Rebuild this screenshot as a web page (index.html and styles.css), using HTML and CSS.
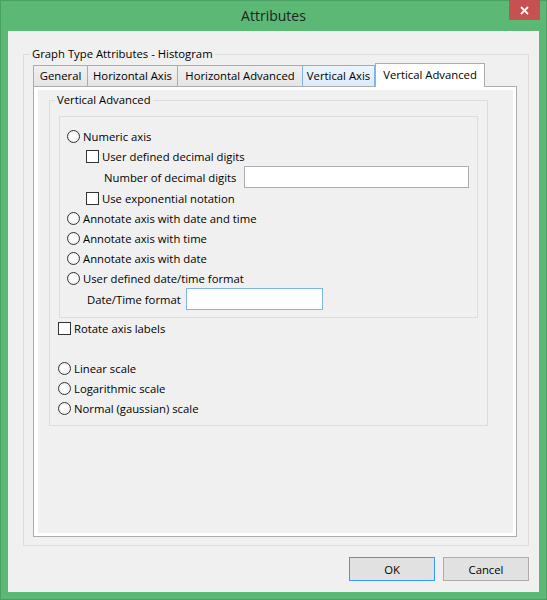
FILE: index.html
```html
<!DOCTYPE html>
<html>
<head>
<meta charset="utf-8">
<title>Attributes</title>
<link rel="stylesheet" href="styles.css">
</head>
<body>
<div class="window">
  <div class="titlebar">
    <span class="title">Attributes</span>
    <button class="close" aria-label="Close">
      <svg width="9" height="9" viewBox="0 0 9 9"><path d="M1 1 L8 8 M8 1 L1 8" stroke="#fff" stroke-width="1.8" fill="none"/></svg>
    </button>
  </div>
  <div class="client">
    <fieldset class="group outer">
      <legend>Graph Type Attributes - Histogram</legend>
      <div class="tabs">
        <div class="tab t-general">General</div>
        <div class="tab t-haxis">Horizontal Axis</div>
        <div class="tab t-hadv">Horizontal Advanced</div>
        <div class="tab t-vaxis hover">Vertical Axis</div>
        <div class="tab t-vadv active">Vertical Advanced</div>
      </div>
      <div class="panel">
        <div class="page">
          <fieldset class="group va">
            <legend>Vertical Advanced</legend>
            <div class="subbox">
              <label class="row"><input type="radio" class="radio" name="fmt"><span>Numeric axis</span></label>
              <label class="row ind1"><input type="checkbox" class="check"><span>User defined decimal digits</span></label>
              <div class="row tall ind2 spread"><span>Number of decimal digits</span><input type="text" class="text digits"></div>
              <label class="row ind1"><input type="checkbox" class="check"><span>Use exponential notation</span></label>
              <label class="row"><input type="radio" class="radio" name="fmt"><span>Annotate axis with date and time</span></label>
              <label class="row"><input type="radio" class="radio" name="fmt"><span>Annotate axis with time</span></label>
              <label class="row"><input type="radio" class="radio" name="fmt"><span>Annotate axis with date</span></label>
              <label class="row"><input type="radio" class="radio" name="fmt"><span>User defined date/time format</span></label>
              <div class="row tall ind3"><span class="dt-label">Date/Time format</span><input type="text" class="text dt"></div>
            </div>
            <label class="row"><input type="checkbox" class="check"><span>Rotate axis labels</span></label>
            <div class="spacer"></div>
            <label class="row"><input type="radio" class="radio" name="scale"><span>Linear scale</span></label>
            <label class="row"><input type="radio" class="radio" name="scale"><span>Logarithmic scale</span></label>
            <label class="row"><input type="radio" class="radio" name="scale"><span>Normal (gaussian) scale</span></label>
          </fieldset>
        </div>
      </div>
    </fieldset>
    <div class="buttons">
      <button class="btn default">OK</button>
      <button class="btn">Cancel</button>
    </div>
  </div>
</div>
</body>
</html>
```

FILE: styles.css
```css
html, body {
  margin: 0;
  padding: 0;
}
body {
  font-family: "Open Sans", "Segoe UI", "Noto Sans", sans-serif;
  font-size: 11.3px;
  color: #000;
  background: #5bb975;
}
.window {
  width: 547px;
  height: 600px;
  box-sizing: border-box;
  background: #5bb975;
  border: 1px solid #4a9f63;
  padding: 0 7px 7px 7px;
  display: flex;
  flex-direction: column;
}
.titlebar {
  position: relative;
  height: 30px;
  display: flex;
  align-items: center;
  justify-content: center;
  flex: none;
}
.title {
  font-size: 14px;
  color: #222;
  line-height: 18px;
}
.close {
  position: absolute;
  top: -1px;
  right: -1px;
  width: 31px;
  height: 20px;
  border: 0;
  margin: 0;
  padding: 1px 0 0 0;
  background: #c75050;
  display: flex;
  align-items: center;
  justify-content: center;
}
.client {
  flex: 1;
  background: #f0f0f0;
  padding: 15px 10px 11px 15px;
  display: flex;
  flex-direction: column;
  box-sizing: border-box;
}
.group {
  border: 1px solid #dcdcdc;
  margin: 0;
  min-width: 0;
}
.group > legend {
  padding: 0 2px;
  margin-left: -3px;
  line-height: 16px;
}
.outer {
  padding: 0 11px 8px 9px;
  flex: none;
}
.tabs {
  display: flex;
  align-items: flex-end;
  height: 24px;
}
.tab {
  height: 21px;
  box-sizing: border-box;
  border: 1px solid #acacac;
  border-bottom: 0;
  padding: 0 0 1px 0;
  display: flex;
  align-items: center;
  justify-content: center;
  margin-left: -1px;
  background: linear-gradient(#f0f0f0, #e5e5e5);
  white-space: nowrap;
}
.tab:first-child {
  margin-left: 0;
}
.t-general { width: 55px; }
.t-haxis { width: 91px; }
.t-hadv { width: 126px; }
.t-vaxis { width: 73px; }
.t-vadv { width: 110px; }
.tab.hover {
  border-color: #7eb4ea;
  background: linear-gradient(#ecf4fc, #dcecfc);
}
.tab.active {
  height: 24px;
  margin-bottom: -1px;
  margin-left: 0;
  padding: 0 0 3px 0;
  background: #fff;
  position: relative;
  z-index: 1;
}
.panel {
  height: 451px;
  box-sizing: border-box;
  border: 1px solid #acacac;
  background: #fff;
  padding: 3px 3px 3px 4px;
  display: flex;
}
.page {
  flex: 1;
  background: #f0f0f0;
}
.va {
  margin: 2px 25px 0 11px;
  padding: 8px 9px 7px 8px;
}
.subbox {
  border: 1px solid #dcdcdc;
  margin-left: 1px;
  padding: 9px 8px 7px 7px;
}
.row {
  display: flex;
  align-items: center;
  height: 20px;
  gap: 3px;
  white-space: nowrap;
}
.row.tall {
  height: 22px;
}
.ind1 { padding-left: 19px; }
.ind2 { padding-left: 37px; }
.ind3 { padding-left: 20px; }
.spread { justify-content: space-between; }
.dt-label { width: 96px; }
.radio, .check {
  appearance: none;
  -webkit-appearance: none;
  margin: 0;
  width: 13px;
  height: 13px;
  box-sizing: border-box;
  border: 1px solid #333;
  flex: none;
}
.radio {
  border-radius: 50%;
  background: radial-gradient(circle at 50% 50%, #ffffff 30%, #e4e4e4 100%);
}
.check {
  background: #fff;
}
.text {
  box-sizing: border-box;
  height: 22px;
  margin: 0;
  padding: 0 3px;
  border: 1px solid #abadb3;
  background: #fff;
  font: inherit;
  outline: none;
}
.text.digits { width: 225px; }
.text.dt {
  width: 137px;
  border-color: #7eb4ea;
}
.spacer { height: 20px; }
.buttons {
  display: flex;
  justify-content: flex-end;
  gap: 8px;
  margin-top: 11px;
}
.btn {
  width: 86px;
  height: 24px;
  box-sizing: border-box;
  margin: 0;
  padding: 0;
  border: 1px solid #adadad;
  background: #e1e1e1;
  font: inherit;
  color: #000;
}
.btn.default {
  border-color: #3399ff;
}
```
